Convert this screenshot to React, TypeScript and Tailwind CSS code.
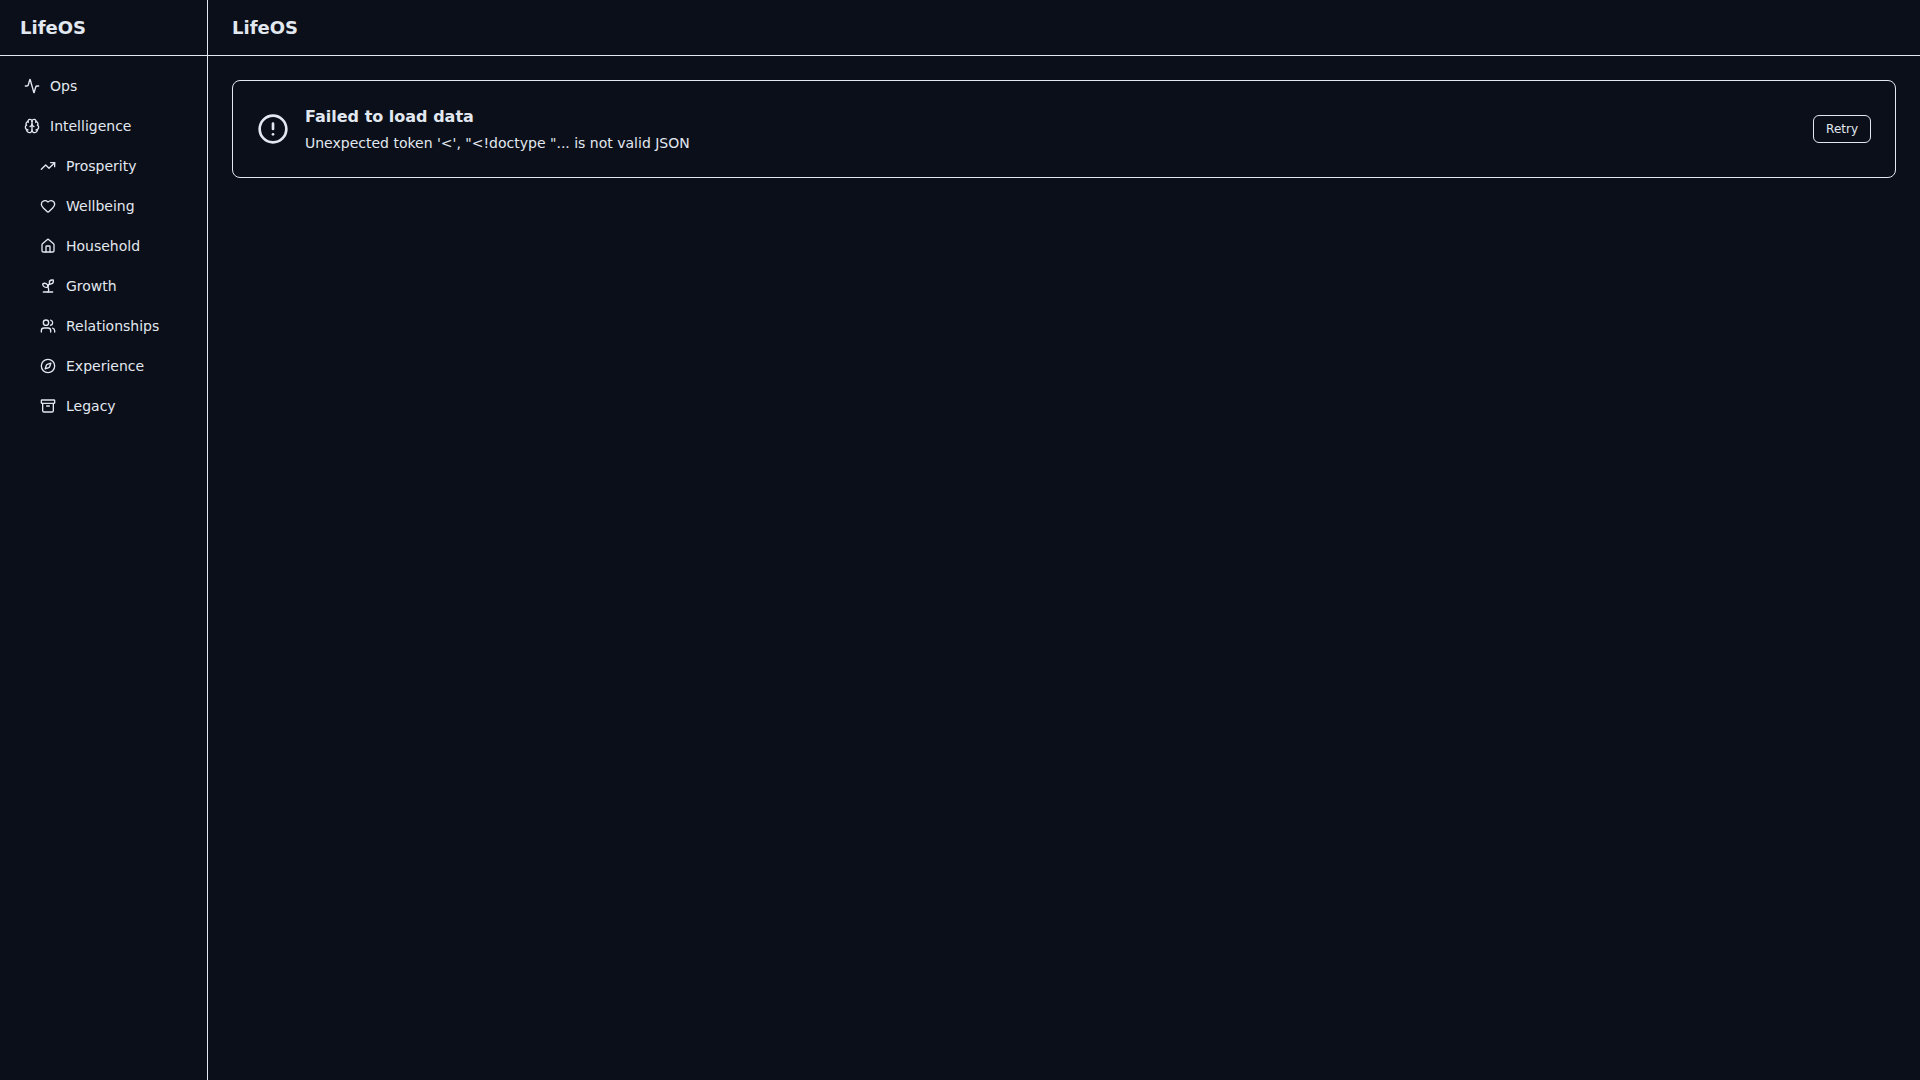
import {
  Activity,
  Archive,
  Brain,
  CircleAlert,
  Compass,
  Heart,
  House,
  Sprout,
  TrendingUp,
  Users,
} from "lucide-react";

interface NavItem {
  label: string;
  href: string;
  icon: React.ElementType;
}

const MAIN_NAV: NavItem[] = [
  { label: "Ops", href: "#ops", icon: Activity },
  { label: "Intelligence", href: "#intelligence", icon: Brain },
];

const DOMAIN_NAV: NavItem[] = [
  { label: "Prosperity", href: "#prosperity", icon: TrendingUp },
  { label: "Wellbeing", href: "#wellbeing", icon: Heart },
  { label: "Household", href: "#household", icon: House },
  { label: "Growth", href: "#growth", icon: Sprout },
  { label: "Relationships", href: "#relationships", icon: Users },
  { label: "Experience", href: "#experience", icon: Compass },
  { label: "Legacy", href: "#legacy", icon: Archive },
];

function NavLink({ item }: { item: NavItem }) {
  const Icon = item.icon;
  return (
    <a href={item.href} className="flex items-center gap-2.5 rounded-md px-3 py-2 text-sm">
      <Icon className="w-4 h-4 shrink-0" />
      {item.label}
    </a>
  );
}

function Sidebar() {
  return (
    <aside className="w-52 shrink-0 border-r border-[#e2e8f0]">
      <div className="flex h-14 items-center border-b border-[#e2e8f0] px-5">
        <span className="text-lg font-bold">LifeOS</span>
      </div>
      <nav className="space-y-1 px-3 py-3">
        {MAIN_NAV.map((item) => (
          <NavLink key={item.href} item={item} />
        ))}
        <div className="space-y-1 pl-4">
          {DOMAIN_NAV.map((item) => (
            <NavLink key={item.href} item={item} />
          ))}
        </div>
      </nav>
    </aside>
  );
}

function ErrorCard({ message }: { message: string }) {
  return (
    <div className="flex items-center gap-4 rounded-lg border border-[#e2e8f0] p-6">
      <CircleAlert className="w-8 h-8 shrink-0" />
      <div className="min-w-0 flex-1">
        <h2 className="font-semibold">Failed to load data</h2>
        <p className="mt-1 text-sm">{message}</p>
      </div>
      <button
        type="button"
        className="flex h-7 items-center rounded-md border border-[#e2e8f0] px-3 text-xs"
      >
        Retry
      </button>
    </div>
  );
}

export default function App() {
  return (
    <div className="flex min-h-screen bg-[#0b0f19] font-['DejaVu_Sans',sans-serif] text-[#e2e8f0]">
      <Sidebar />
      <div className="min-w-0 flex-1">
        <header className="flex h-14 items-center border-b border-[#e2e8f0] px-6">
          <h1 className="text-lg font-bold">LifeOS</h1>
        </header>
        <main className="p-6">
          <ErrorCard message={`Unexpected token '<', "<!doctype "... is not valid JSON`} />
        </main>
      </div>
    </div>
  );
}
